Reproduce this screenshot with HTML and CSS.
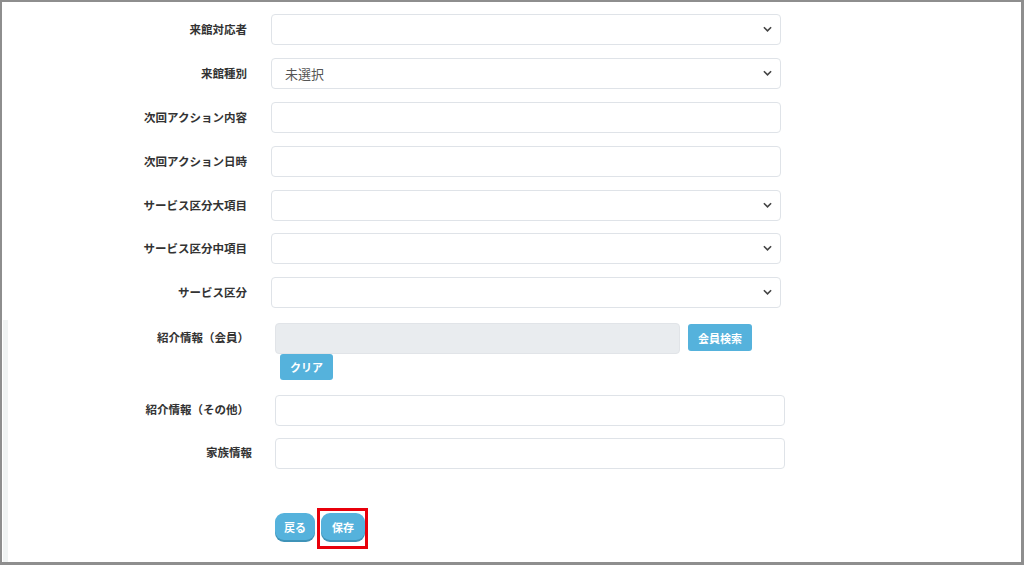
FILE: index.html
```html
<!DOCTYPE html>
<html lang="ja">
<head>
<meta charset="utf-8">
<title>来館登録</title>
<link rel="stylesheet" href="styles.css">
</head>
<body>
<div class="frame">
  <form class="form">
    <div class="row">
      <label class="label">来館対応者</label>
      <div class="field select"><span class="value"></span>
        <svg class="chev" viewBox="0 0 10 6" width="9" height="6"><path d="M1 1 L5 5 L9 1" fill="none" stroke="#444" stroke-width="1.8"/></svg>
      </div>
    </div>
    <div class="row">
      <label class="label">来館種別</label>
      <div class="field select"><span class="value">未選択</span>
        <svg class="chev" viewBox="0 0 10 6" width="9" height="6"><path d="M1 1 L5 5 L9 1" fill="none" stroke="#444" stroke-width="1.8"/></svg>
      </div>
    </div>
    <div class="row">
      <label class="label">次回アクション内容</label>
      <div class="field"></div>
    </div>
    <div class="row">
      <label class="label">次回アクション日時</label>
      <div class="field"></div>
    </div>
    <div class="row">
      <label class="label">サービス区分大項目</label>
      <div class="field select"><span class="value"></span>
        <svg class="chev" viewBox="0 0 10 6" width="9" height="6"><path d="M1 1 L5 5 L9 1" fill="none" stroke="#444" stroke-width="1.8"/></svg>
      </div>
    </div>
    <div class="row">
      <label class="label">サービス区分中項目</label>
      <div class="field select"><span class="value"></span>
        <svg class="chev" viewBox="0 0 10 6" width="9" height="6"><path d="M1 1 L5 5 L9 1" fill="none" stroke="#444" stroke-width="1.8"/></svg>
      </div>
    </div>
    <div class="row">
      <label class="label">サービス区分</label>
      <div class="field select"><span class="value"></span>
        <svg class="chev" viewBox="0 0 10 6" width="9" height="6"><path d="M1 1 L5 5 L9 1" fill="none" stroke="#444" stroke-width="1.8"/></svg>
      </div>
    </div>

    <div class="row2 member">
      <label class="label2">紹介情報（会員）</label>
      <div class="member-col">
        <div class="member-line">
          <div class="field2 disabled short"></div>
          <button type="button" class="btn-info search">会員検索</button>
        </div>
        <button type="button" class="btn-info clear">クリア</button>
      </div>
    </div>
    <div class="row2 other">
      <label class="label2">紹介情報（その他）</label>
      <div class="field2"></div>
    </div>
    <div class="row2 family">
      <label class="label2 fam">家族情報</label>
      <div class="field2"></div>
    </div>

    <div class="actions">
      <button type="button" class="btn-round">戻る</button>
      <span class="highlight"><button type="button" class="btn-round">保存</button></span>
    </div>
  </form>
</div>
</body>
</html>
```
FILE: styles.css
```css
*, *::before, *::after { box-sizing: border-box; }
html, body { margin: 0; padding: 0; background: #fff; }
body {
  font-family: "Noto Sans CJK JP", "Noto Sans", "Liberation Sans", sans-serif;
  color: #333;
}
.frame {
  position: relative;
  width: 1024px;
  height: 565px;
  border-top: 2px solid #8e8e8e;
  border-left: 2px solid #8e8e8e;
  border-right: 3px solid #8e8e8e;
  border-bottom: 3px solid #8e8e8e;
  background: #fff;
  overflow: hidden;
}
.frame::before {
  content: "";
  position: absolute;
  left: 1px;
  top: 318px;
  bottom: 0;
  width: 5px;
  background: #f0f3f3;
}
.form {
  padding-top: 12px;
}
.row {
  display: flex;
  align-items: center;
  height: 31px;
  margin-bottom: 13px;
}
.row:nth-child(n+5) { margin-top: -0.3px; }
.label {
  width: 245px;
  text-align: right;
  font-size: 11.5px;
  font-weight: 700;
  color: #333;
  padding-bottom: 1px;
}
.field {
  position: relative;
  margin-left: 24px;
  width: 510px;
  height: 31px;
  border: 1px solid #dfe3e8;
  border-radius: 4px;
  background: #fff;
  display: flex;
  align-items: center;
}
.select .value {
  padding-left: 13px;
  font-size: 13px;
  color: #555;
}
.chev {
  position: absolute;
  right: 8px;
  top: 11px;
}
.row2 {
  display: flex;
  align-items: flex-start;
}
.row2.member { margin-top: 15px; }
.row2.other { margin-top: 15px; }
.row2.family { margin-top: 12px; }
.label2 {
  width: 247px;
  text-align: right;
  font-size: 11.5px;
  font-weight: 700;
  color: #333;
  line-height: 29px;
  height: 31px;
}
.label2.fam { width: 250px; }
.field2 {
  margin-left: 26px;
  width: 510px;
  height: 31px;
  border: 1px solid #dfe3e8;
  border-radius: 4px;
  background: #fff;
}
.fam + .field2 { margin-left: 23px; }
.member-col {
  margin-left: 26px;
  display: flex;
  flex-direction: column;
  align-items: flex-start;
}
.member-line {
  display: flex;
  align-items: flex-start;
}
.field2.disabled {
  margin-left: 0;
  width: 405px;
  background: #e9ecef;
  border-color: #e1e4e8;
}
.btn-info {
  border: none;
  background: #55b2dc;
  color: #fff;
  font-family: inherit;
  font-size: 11px;
  font-weight: 700;
  border-radius: 3px;
  padding: 0;
  cursor: pointer;
}
.search {
  margin-left: 8px;
  margin-top: 1px;
  width: 64px;
  height: 27px;
}
.clear {
  margin-left: 5px;
  margin-top: 0;
  width: 53px;
  height: 26px;
}
.actions {
  margin-top: 44px;
  margin-left: 273px;
  display: flex;
  align-items: center;
  gap: 6px;
}
.btn-round {
  border: none;
  background: #55b2dc;
  color: #fff;
  font-family: inherit;
  font-size: 11px;
  font-weight: 700;
  height: 27px;
  padding: 0 9px;
  border-radius: 9px;
  box-shadow: 0 2px 0 #3f93b8;
  cursor: pointer;
}
.highlight {
  position: relative;
  display: inline-block;
  line-height: 0;
}
.highlight .btn-round { padding: 0 11px; }
.highlight::after {
  content: "";
  position: absolute;
  left: -4px;
  top: -5px;
  width: 51px;
  height: 41px;
  border: 3px solid #e8000b;
  pointer-events: none;
}
```
